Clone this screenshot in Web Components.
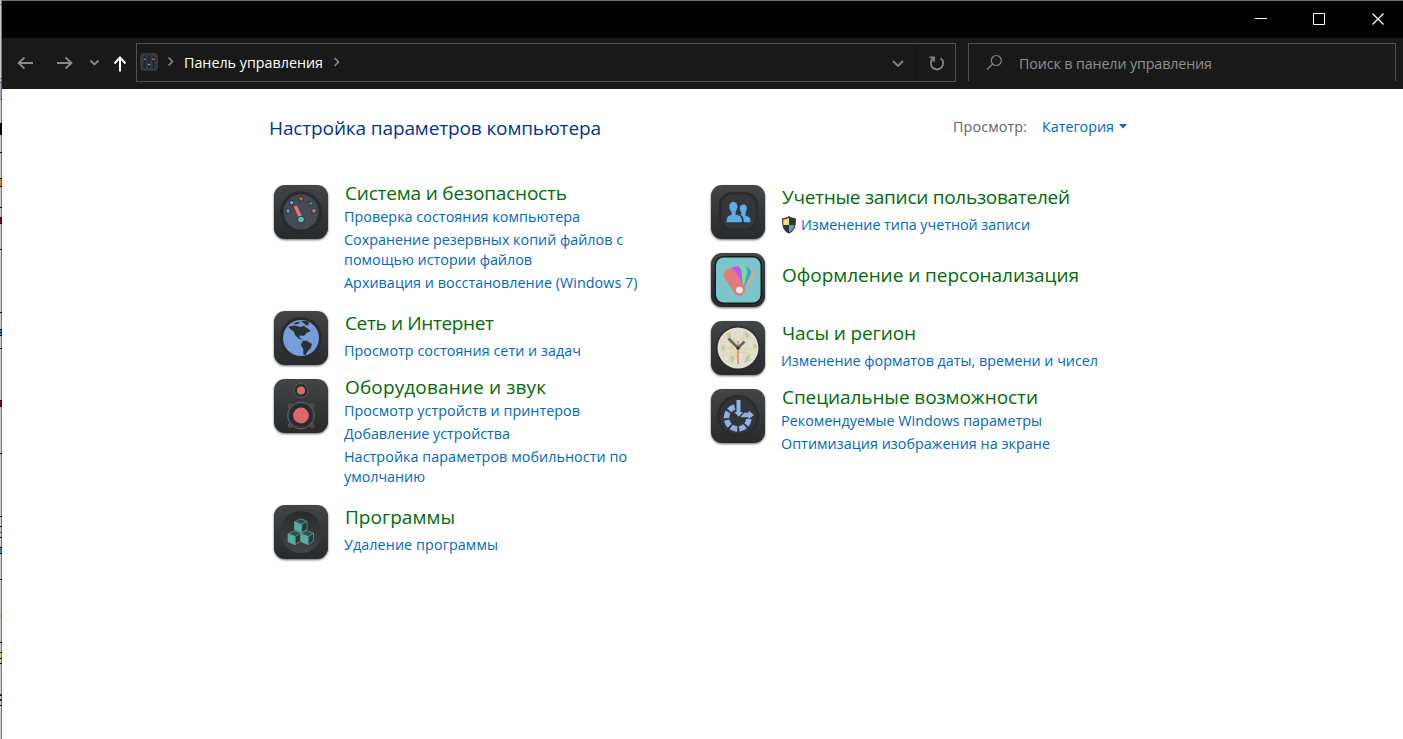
<!DOCTYPE html>
<html lang="ru">
<head>
<meta charset="utf-8">
<title>Панель управления</title>
<style>
html,body{margin:0;height:100%;overflow:hidden;background:#fff}
body{font-family:"Open Sans","Noto Sans",sans-serif}
</style>
</head>
<body>
<control-panel></control-panel>
<script>
const define=(name,html,extra)=>customElements.define(name,class extends HTMLElement{
  constructor(){super();this.attachShadow({mode:'open'});}
  connectedCallback(){this.shadowRoot.innerHTML=typeof html==='function'?html(this):html;if(extra)extra(this);}
});

/* A single line of text tracked to a given width. */
define('fit-text','<style>:host{display:inline-block;white-space:nowrap}span{display:inline-block}</style><span><slot></slot></span>',el=>{
  const s=el.shadowRoot.querySelector('span'),w=parseFloat(el.getAttribute('w'));
  const n=s.getBoundingClientRect().width;
  if(w&&n){const ls=(w-n)/(el.textContent.length-1);s.style.letterSpacing=ls+'px';s.style.marginRight=-ls+'px';}
});

const ticks=(cx,cy,r,list)=>list.map(([a,c])=>{const t=a*Math.PI/180;return `<circle cx="${cx+r*Math.cos(t)}" cy="${cy-r*Math.sin(t)}" r="2.7" fill="#303339"/><circle cx="${cx+r*Math.cos(t)}" cy="${cy-r*Math.sin(t)}" r="1.8" fill="${c}"/>`}).join('');
const cube=(x,y)=>`<g transform="translate(${x} ${y})" stroke="#55aaa0" stroke-width=".7" stroke-linejoin="round"><path d="M0 3.2 6 0l6.500 2.600-5.300 3.300z" fill="#364b4a"/><path d="M0 3.200 7.200 5.900V14L0 11z" fill="#58aea4"/><path d="M7.200 5.900 12.500 2.600V10.500L7.200 14z" fill="#2d3938"/></g>`;
const ring=(()=>{let s='';for(let i=0;i<6;i++){const a=(106+i*43)*Math.PI/180,b=(106+i*43+33)*Math.PI/180,p=(r,t)=>`${(26.700+r*Math.cos(t)).toFixed(2)} ${(28.800-r*Math.sin(t)).toFixed(2)}`;s+=`M${p(14,a)}A14 14 0 0 0 ${p(14,b)}L${p(8.500,b)}A8.500 8.500 0 0 1 ${p(8.500,a)}Z`}return s})();
const art={
gauge:`<circle cx="27" cy="27" r="21" fill="#292b2d"/><circle cx="27" cy="27" r="17.500" fill="#454b55"/>${ticks(27,26.800,13,[[176,'#51aaa7'],[136,'#819bd2'],[90,'#a17251'],[40,'#3f9257'],[4,'#dc6e70']])}<path d="M20 22 21.500 20.500 23 21 29 33 25.500 34.500z" fill="#ed7476"/><circle cx="27" cy="34.500" r="3.800" fill="#34383e"/><circle cx="27" cy="34.500" r="2.800" fill="#5abfb5"/>`,
globe:`<circle cx="27" cy="27" r="21" fill="#292b2d"/><circle cx="27" cy="27" r="18" fill="#779cda"/><g fill="#2b3035"><path d="M14.500 15.500 20.700 14.500l6 1.500L30 14.800l2.700 2.200 2 1.300 2 2-4 1.400-2 2.600-2 .7-2.700-.7-.7 2L28.700 29l-4-1.300-3.400-3.400L19.500 20l-3-1.500z"/><path d="M28.700 29.700h4L38 33l-1.300 4.300-3.400 3.400-2 3.600-2-1.300V38.300L27 34z"/><path d="m19 12.500 5-1.800 2 1.300-4 1.500zM26.500 10.500l5-.8 3.500 1.300-1 3.500-2.500-.5-1.500-2z"/></g>`,
speaker:`<circle cx="27" cy="11.500" r="7" fill="#292b2c" stroke="#5a5c5e"/><circle cx="27" cy="11.500" r="4" fill="#dd6b6c"/><g fill="#343638" stroke="#626466"><path d="M16 26.500h22v21H16z" stroke="none"/><circle cx="16" cy="26.600" r="1.800"/><circle cx="38" cy="26.600" r="1.800"/><circle cx="16" cy="46.500" r="1.800"/><circle cx="38" cy="46.500" r="1.800"/><circle cx="27" cy="36.500" r="13.400"/></g><circle cx="27" cy="36.500" r="11" fill="#292a2b"/><circle cx="27" cy="36.500" r="7.900" fill="#d9696a"/>`,
cubes:`<circle cx="27" cy="27" r="21" fill="url(#dark)"/>${cube(20.500,13.700)}${cube(14,25.700)}${cube(27,25.700)}`,
users:`<rect x="8" y="7" width="39" height="39" rx="13" fill="#292b2c"/><rect x="10.500" y="9.500" width="34" height="34" rx="10.500" fill="#343638"/><g fill="#5aafea"><path d="M22.300 17c3 0 4.200 2.300 4 5-.2 2.700-1.500 3.900-1.700 5.500v2l4.200 1.500c1.500.7 2 3 2.100 6.300H15.500c.1-3.300.7-5.600 2.200-6.300l3-1.500v-2c-.8-1.500-2.200-2.900-2.300-5.500-.2-3 1-5 3.900-5z"/><path d="M32.500 19.500c2.600 0 3.500 2 3.300 4.200-.2 2.300-1.200 3.400-1.300 5v2l3.500 1.200c1.200.6 1.500 2.600 1.500 5.400h-6.800c0-4-.8-6.500-3.500-7.700l1.300-.8v-1.300c-1.100-1.300-1.700-2.500-1.700-4 .1-2.400 1.300-4 3.700-4z"/></g>`,
swatches:`<rect x="3.500" y="3" width="47.500" height="48" rx="9" fill="#191c1d"/><rect x="5" y="4.500" width="44.500" height="45" rx="7.800" fill="#7cc5cb"/><g transform="translate(28.500 37)">${[['#eaa77c',28],['#42a2e8',18],['#72e583',5],['#c451fb',-12],['#e7797c',-32]].map(([c,a])=>`<path d="M-3.500 3V0L-6-18Q-6-24 0-24T6-18L3.500 0V3z" fill="${c}" transform="rotate(${a})"/>`).join('')}<rect x="-6" y="-23.500" width="12" height="29" rx="5.500" fill="#e7797c" transform="rotate(-32)"/></g><circle cx="28.500" cy="37" r="3.300" fill="#eee"/>`,
clock:`<circle cx="27" cy="27" r="22" fill="#292b2c"/><circle cx="27" cy="27" r="20.500" fill="#e2ded2"/><g fill="#b8d0a0"><path d="M15 12l5-1 1 5-4 2zM33 11l4 1 2 5-4-1zM11 24l3 1-1 5-3-1zM19 35l4-1 1 5-4 3zM35 35l5-2-2 7-5 2zM42 24l3-2 1 4-3 2z"/></g><g fill="none" stroke="#edd18b" stroke-width="1"><path d="M9 20q10 3 16 0t17-3M11 35q12-6 31-2M19 9q2 17 10 36M33 10q-2 19-13 33M9 29l15-3 21 4"/></g><g fill="none" stroke="#c7cacb" stroke-width=".6"><path d="M14 14l27 25M10 31l26-17M17 40l8-30M31 42l7-27"/></g><path d="M17.500 17.500 27 27" stroke="#636565" stroke-width="2.500"/><path d="m27 27 6.500-6.500" stroke="#646665" stroke-width="2.500"/><path d="M27 20v23" stroke="#df5757" stroke-opacity=".7" stroke-width="1.500"/><circle cx="27" cy="27" r="1.700" fill="#333"/>`,
access:`<circle cx="27" cy="27" r="21" fill="#292b2c"/><circle cx="27" cy="27" r="18.500" fill="#323536"/><g fill="#8fb1ea"><path d="${ring}"/><path d="M25.500 11h4v12h2.500l-4.200 4.700-4.600-4.700h2.300z"/><path d="M29.500 28.300 33 23.800h4.500v-2.300L43 26l-5.500 4.200v-1.900z"/></g>`
};
define('category-icon',el=>`<style>:host{display:block;width:54px;height:54px;flex:none}svg{display:block;overflow:visible;filter:drop-shadow(0 1.500px 1px #0009)}</style><svg width="54" height="54" viewBox="0 0 54 54"><defs><linearGradient id="case" x2="0" y2="1"><stop stop-color="#434547"/><stop offset=".5" stop-color="#343637"/><stop offset="1" stop-color="#292a2b"/></linearGradient><linearGradient id="dark" x2="0" y2="1"><stop stop-color="#292a2b"/><stop offset="1" stop-color="#434445"/></linearGradient></defs><rect width="54" height="54" rx="11" fill="url(#case)"/>${art[el.getAttribute('name')]}</svg>`);

define('category-link',`<style>:host{display:flex;gap:3px;font-size:14.300px;line-height:20px;color:#0066cc}svg{display:block;flex:none}div{display:flex;flex-direction:column;align-items:flex-start}</style><slot name="icon"></slot><div><slot></slot></div>`);
define('category-row',el=>{const k=el.getAttribute('kind');const m={multi:[-4,2],single:[0,6],none:[10,0]}[k];return `<style>
:host{display:flex;height:${el.getAttribute('h')||68}px;align-items:flex-start}
.text{margin:${m[0]}px 0 0 16px;color:#006b0a}
.head{font-size:19px;line-height:24px;height:24px;margin-left:1px}
.links{padding-top:${m[1]}px;display:flex;flex-direction:column;gap:3px}
</style><category-icon name="${el.getAttribute('icon')}"></category-icon><div class="text"><div class="head"><slot name="head"></slot></div><div class="links"><slot></slot></div></div>`});
define('shield-icon','<style>:host{display:block;width:17px;height:20px;flex:none}svg{display:block}</style><svg width="17" height="20" viewBox="0 0 17 20"><path d="M8 1c2 1.500 4 2 6.800 2.200.5 7-.6 12.500-6.800 15.300C1.800 15.700.7 10.200 1.200 3.200 4 3 6 2.500 8 1z" fill="#303438"/><path d="M8 2.700V10H2.400Q2 7.500 2.300 4.500 5.500 4.200 8 2.700z" fill="#f8dc74"/><path d="M8 10h5.600C13 13.500 11.300 15.900 8 17.300z" fill="#5b9bc7"/></svg>');

define('title-bar',`<style>:host{display:flex;justify-content:flex-end;height:37px;background:#000}svg{display:block}</style>
<svg width="150" height="37" viewBox="0 0 150 37" fill="none" stroke="#fff"><path d="M2 17.500h12M60.500 12.500h11v11h-11z"/><path d="M119.500 12.500l11 11m0-11-11 11" stroke-width="1.300"/></svg>`);

define('nav-bar',`<style>
:host{display:flex;align-items:flex-start;height:51px;background:#191919;box-sizing:border-box;padding:5px 7px 0 0}
svg{display:block;flex:none}
.nav{width:134px}
.address{display:flex;align-items:center;box-sizing:border-box;width:820px;height:39px;border:1px solid #535353;color:#fff}
.address .crumb{font-size:14.300px;line-height:38px;height:39px;margin-left:8px;flex:1;display:flex;align-items:center;gap:10px}
.search{display:flex;margin-left:12px;box-sizing:border-box;flex:1;height:38px;border:1px solid #535353;border-bottom:0;color:#919191;font-size:14.300px;line-height:40px;}
.search fit-text{margin-left:15px}
</style>
<svg class="nav" width="134" height="39" viewBox="2 43 134 39" fill="none" stroke="#8b8b8b" stroke-width="1.800"><path d="M18.500 63H33m-8.500-5.500L18.500 63l6 5.500M57 63h14.500m-6-5.500 6 5.500-6 5.500M90.500 60.500l4 4 4-4"/><path d="M120 71.500V58m-5.500 5.500 5.500-6 5.500 6" stroke="#fff" stroke-width="2"/></svg>
<div class="address">
<svg width="39" height="37" viewBox="137 44 39 37"><rect x="140" y="53" width="18" height="18" rx="4" fill="#35383b"/><path d="M144.500 56v12m4.500-12v12m4.500-12v12" stroke="#191c1f" stroke-width="1.400"/><path d="M143.700 59.300h1.800" stroke="#5892ee" stroke-width="1.500"/><path d="M148.100 64.500h1.800" stroke="#55c4b0" stroke-width="1.500"/><path d="M152.500 59.300h1.800" stroke="#e87476" stroke-width="1.500"/><path d="m168.500 57.500 4 4-4 4" fill="none" stroke="#8b8b8b" stroke-width="1.600"/></svg>
<div class="crumb"><fit-text w="139">Панель управления</fit-text><svg width="8" height="12" viewBox="0 0 8 12" fill="none" stroke="#8b8b8b" stroke-width="1.600"><path d="m1.500 1 4 4-4 4"/></svg></div>
<svg width="68" height="37" viewBox="886.500 44 68 37" fill="none" stroke="#858585" stroke-width="1.800"><path d="m892.500 61 5 5 5-5"/><path d="M915 44v37" stroke="#141414" stroke-width="1"/><path d="M933 58.200a6.200 6.200 0 1 0 7 0M929 57.300h4.500v4.500"/></svg>
</div>
<div class="search"><svg width="35" height="37" viewBox="969 44 35 37" fill="none" stroke="#858585" stroke-width="1.200"><circle cx="996.300" cy="60.500" r="5"/><path d="m992.700 64-5.500 5.500"/></svg><fit-text w="193">Поиск в панели управления</fit-text></div>`);

define('page-header',`<style>:host{display:flex;justify-content:space-between;align-items:flex-start;width:858px;height:78px;line-height:24px}
.title{font-size:19px;color:#003399;margin-top:9px}.view{display:flex;align-items:center;height:24px;margin-top:8px;font-size:14.300px;color:#5a6470}.view .cat{margin-left:15px;color:#0066cc}svg{margin:-2px 0 0 5px}</style>
<fit-text class="title" w="332">Настройка параметров компьютера</fit-text>
<div class="view"><fit-text w="74">Просмотр:</fit-text><fit-text class="cat" w="72">Категория</fit-text><svg width="8" height="5"><path d="M0 0h8L4 4.500z" fill="#0066cc"/></svg></div>`);

const data=[[
 ['gauge','multi',126,['Система и безопасность',222],[[['Проверка состояния компьютера',236]],[['Сохранение резервных копий файлов с',279],['помощью истории файлов',188]],[['Архивация и восстановление (Windows 7)',293.500]]]],
 ['globe','single',68,['Сеть и Интернет',149],[[['Просмотр состояния сети и задач',237]]]],
 ['speaker','multi',126,['Оборудование и звук',201],[[['Просмотр устройств и принтеров',236]],[['Добавление устройства',166]],[['Настройка параметров мобильности по',283],['умолчанию',81]]]],
 ['cubes','single',68,['Программы',110],[[['Удаление программы',154]]]]
],[
 ['users','single',68,['Учетные записи пользователей',288],[[['Изменение типа учетной записи',229]]]],
 ['swatches','none',68,['Оформление и персонализация',297],[]],
 ['clock','single',68,['Часы и регион',134],[[['Изменение форматов даты, времени и чисел',317]]]],
 ['access','multi',68,['Специальные возможности',256],[[['Рекомендуемые Windows параметры',261]],[['Оптимизация изображения на экране',269]]]]
]];
const fit=([t,w],a='')=>`<fit-text w="${w}" ${a}>${t}</fit-text>`;
define('category-grid',`<style>:host{display:grid;grid-template-columns:437px 437px;padding-left:5px}</style>`+data.map(col=>`<div>${col.map(([i,k,h,head,links])=>`<category-row icon="${i}" kind="${k}" h="${h}">${fit(head,'slot="head"')}${links.map(l=>`<category-link>${i==='users'?'<shield-icon slot="icon"></shield-icon>':''}${l.map(x=>fit(x)).join('')}</category-link>`).join('')}</category-row>`).join('')}</div>`).join(''));

/* Sliver of the window behind, as [top, height, colour]. */
const marks=[[4,1,'#777'],[78,1,'#777'],[81,18,'#a5b0ba'],[82,1,'#666'],[99,1,'#778899'],[123,12,'#06070d'],[152,1,'#111'],[178,9,'#111'],[179,7,'#d98a32'],[207,1,'#111'],[217,7,'#111'],[218,5,'#850911'],[249,1,'#111'],[312,1,'#111'],[329,7,'#111'],[330,2,'#4386d4'],[333,2,'#4386d4'],[348,1,'#111'],[400,7,'#111'],[401,5,'#850911'],[453,1,'#111'],[516,1,'#111'],[526,1,'#111'],[532,1,'#2070b0'],[537,1,'#111'],[547,7,'#111'],[548,5,'#4386d4'],[579,1,'#111'],[615,2,'#c9b657'],[642,1,'#111'],[652,1,'#850911'],[653,5,'#dfcb75'],[658,1,'#111'],[663,1,'#111'],[694,1,'#164f90'],[695,5,'#222'],[696,3,'#dfcb75'],[700,1,'#164f90'],[705,1,'#111']];
define('window-edge',`<style>:host{display:block;width:2px;height:739px;flex:none}svg{display:block}</style><svg width="2" height="739" shape-rendering="crispEdges"><rect width="2" height="739" fill="#cbcbcb"/>${marks.map(([y,h,c])=>`<rect y="${y}" width="2" height="${h}" fill="${c}"/>`).join('')}<rect x="1" width="1" height="739" fill="#000" opacity=".42"/></svg>`);

define('control-panel',`<style>:host{display:flex;width:1403px;height:739px}main{flex:1;border-top:1px solid #707575;box-sizing:border-box}section{padding:18px 0 0 267px}</style>
<window-edge></window-edge><main><title-bar></title-bar><nav-bar></nav-bar><section><page-header></page-header><category-grid></category-grid></section></main>`);
</script>
</body>
</html>
